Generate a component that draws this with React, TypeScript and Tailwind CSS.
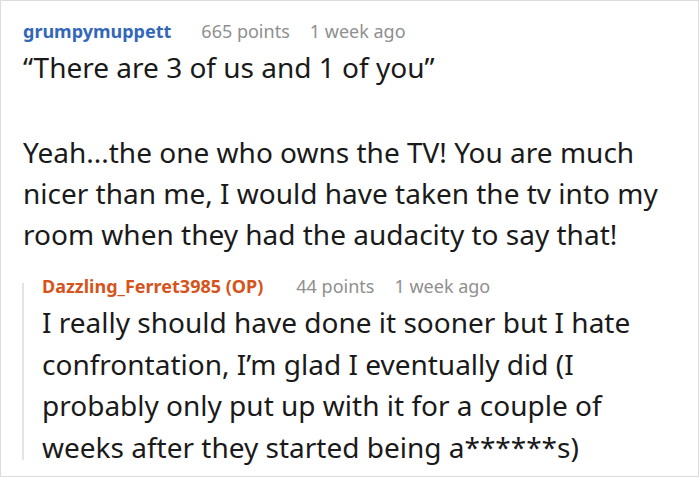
const Meta = ({ name, points, time, color, gap }: { name: string; points: string; time: string; color: string; gap: string }) => (
  <div className="flex items-baseline text-[18px] leading-[24px]">
    <span className={`font-bold ${color}`}>{name}</span>
    <span className={`${gap} text-[#8f8f8f]`}>{points}</span>
    <span className="ml-[20px] text-[#8f8f8f]">{time}</span>
  </div>
);

export default function App() {
  return (
    <div className="w-[699px] h-[477px] bg-white border border-[#dcdcdc] font-['Noto_Sans',sans-serif] text-[#1a1a1a] overflow-hidden">
      <div className="pl-[22px] pt-[18px]">
        <Meta name="grumpymuppett" points="665 points" time="1 week ago" color="text-[#3367b8]" gap="ml-[30px]" />
        <div className="text-[28px] leading-[41px] mt-[4px]">
          <p>“There are 3 of us and 1 of you”</p>
          <p className="mt-[44px]">
            Yeah...the one who owns the TV! You are much nicer than me, I would have taken the tv into my room when they had the audacity to say that!
          </p>
        </div>
        {/* reply */}
        <div className="mt-[19px] flex">
          <div className="w-[2px] ml-[-1px] mt-[9px] mb-[8px] bg-[#e4e4e4] shrink-0" />
          <div className="ml-[18px] pr-[20px]">
            <Meta name="Dazzling_Ferret3985 (OP)" points="44 points" time="1 week ago" color="text-[#d6541c]" gap="ml-[33px]" />
            <p className="text-[28px] leading-[41.5px] mt-[4px]">
              I really should have done it sooner but I hate confrontation, I’m glad I eventually did (I probably only put up with it for a couple of weeks after they started being a******s)
            </p>
          </div>
        </div>
      </div>
    </div>
  );
}
